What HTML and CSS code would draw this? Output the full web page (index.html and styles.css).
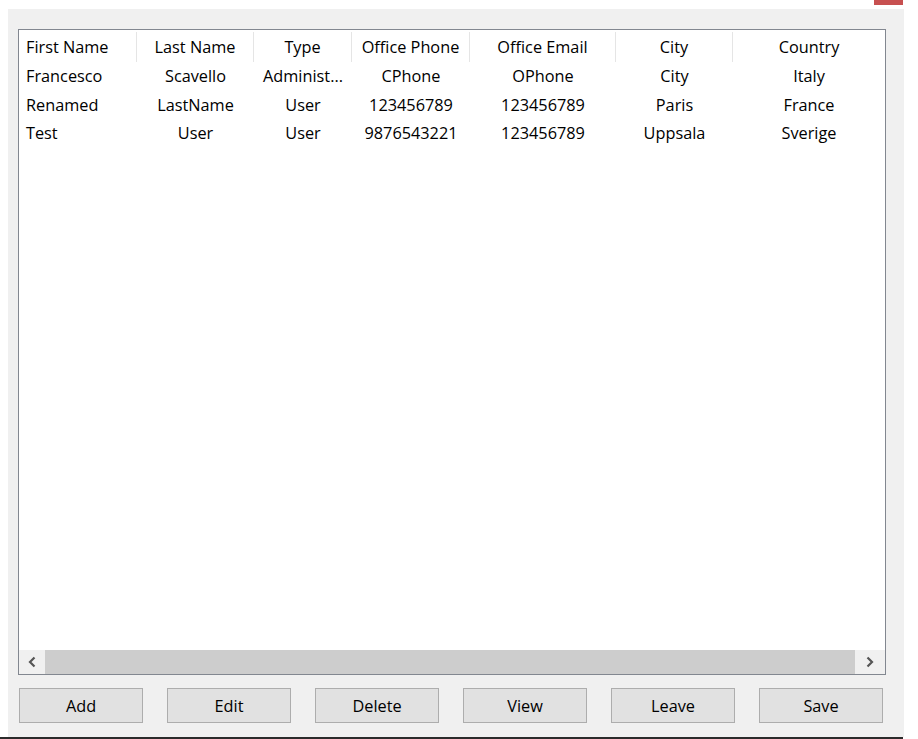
FILE: index.html
```html
<!DOCTYPE html>
<html>
<head>
<meta charset="utf-8">
<link rel="stylesheet" href="styles.css">
</head>
<body>
<div class="topstrip"><div class="closebtn"></div></div>
<div class="window">
  <div class="listview">
    <div class="grid">
      <div class="row header">
        <div class="c c1">First Name</div>
        <div class="c c2">Last Name</div>
        <div class="c c3">Type</div>
        <div class="c c4">Office Phone</div>
        <div class="c c5">Office Email</div>
        <div class="c c6">City</div>
        <div class="c c7">Country</div>
      </div>
      <div class="row first">
        <div class="c c1">Francesco</div>
        <div class="c c2">Scavello</div>
        <div class="c c3">Administ...</div>
        <div class="c c4">CPhone</div>
        <div class="c c5">OPhone</div>
        <div class="c c6">City</div>
        <div class="c c7">Italy</div>
      </div>
      <div class="row">
        <div class="c c1">Renamed</div>
        <div class="c c2">LastName</div>
        <div class="c c3">User</div>
        <div class="c c4">123456789</div>
        <div class="c c5">123456789</div>
        <div class="c c6">Paris</div>
        <div class="c c7">France</div>
      </div>
      <div class="row">
        <div class="c c1">Test</div>
        <div class="c c2">User</div>
        <div class="c c3">User</div>
        <div class="c c4">9876543221</div>
        <div class="c c5">123456789</div>
        <div class="c c6">Uppsala</div>
        <div class="c c7">Sverige</div>
      </div>
    </div>
    <div class="hscroll">
      <div class="arrow left"><svg width="10" height="12" viewBox="0 0 10 12"><path d="M7.5 1.5 L3 6 L7.5 10.5" fill="none" stroke="#555" stroke-width="2.2"/></svg></div>
      <div class="thumb"></div>
      <div class="arrow right"><svg width="10" height="12" viewBox="0 0 10 12"><path d="M2.5 1.5 L7 6 L2.5 10.5" fill="none" stroke="#555" stroke-width="2.2"/></svg></div>
    </div>
  </div>
  <div class="buttons">
    <div class="btn">Add</div>
    <div class="btn">Edit</div>
    <div class="btn">Delete</div>
    <div class="btn">View</div>
    <div class="btn">Leave</div>
    <div class="btn">Save</div>
  </div>
</div>
<div class="bottomline"></div>
</body>
</html>
```
FILE: styles.css
```css
html, body {
  margin: 0;
  padding: 0;
  background: #ffffff;
}
body {
  font-family: "Open Sans", "Noto Sans", sans-serif;
  font-size: 16.3px;
  color: #000;
  width: 918px;
  height: 739px;
  overflow: hidden;
}
.topstrip {
  height: 9px;
  display: flex;
  justify-content: flex-end;
  padding-right: 15px;
}
.closebtn {
  width: 29px;
  height: 5px;
  background: #c75050;
}
.window {
  margin-left: 8px;
  width: 896px;
  height: 728px;
  background: #f0f0f0;
  box-sizing: border-box;
  padding-top: 20px;
  padding-left: 10px;
}
.listview {
  width: 868px;
  height: 646px;
  box-sizing: border-box;
  border: 1px solid #828790;
  background: #fff;
  display: flex;
  flex-direction: column;
}
.grid {
  flex: 1;
  overflow: hidden;
}
.row {
  display: flex;
  height: 28.5px;
  align-items: center;
}
.row.header {
  height: 31px;
  margin-top: 1px;
}
.c {
  box-sizing: border-box;
  white-space: nowrap;
  overflow: hidden;
  text-align: center;
  padding: 0 2px;
}
.header .c {
  border-right: 1px solid #e5e5e5;
  height: 30px;
  line-height: 30px;
}
.header .c7 { border-right: none; }
.c1 { width: 118px; text-align: left; padding-left: 7px; }
.c2 { width: 117px; }
.c3 { width: 98px; }
.c4 { width: 118px; }
.c5 { width: 146px; }
.c6 { width: 117px; }
.c7 { width: 152px; }
.hscroll {
  height: 24px;
  display: flex;
  background: #f0f0f0;
}
.arrow {
  display: flex;
  align-items: center;
  justify-content: center;
}
.arrow.left { width: 26px; }
.arrow.right { width: 30px; }
.thumb {
  flex: 1;
  background: #cdcdcd;
}
.buttons {
  display: flex;
  gap: 24px;
  margin-top: 13px;
  padding-left: 1px;
}
.btn {
  width: 124px;
  height: 35px;
  box-sizing: border-box;
  border: 1px solid #adadad;
  background: #e1e1e1;
  display: flex;
  align-items: center;
  justify-content: center;
}
.bottomline {
  width: 903px;
  height: 2px;
  background: #2b2b2b;
}
```
